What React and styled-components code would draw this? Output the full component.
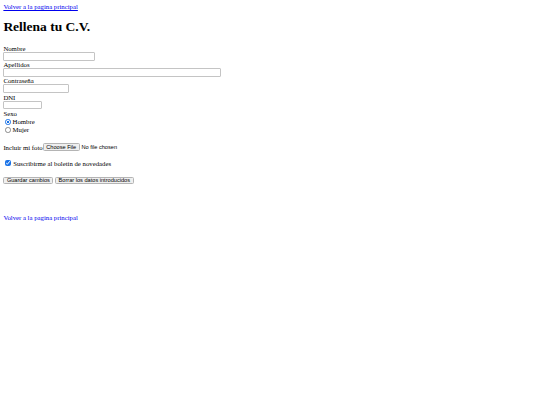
import React from "react";
import styled, { createGlobalStyle } from "styled-components";

const Global = createGlobalStyle`
  html, body { background: #fff; }
  body {
    margin: 3.375px;
    font-family: "Liberation Serif", "Times New Roman", serif;
    font-size: 6.75px;
    color: #000;
  }
`;

const HomeLink = styled.a`
  color: #0000ee;
  text-decoration: underline;
  text-decoration-thickness: 0.5px;
  text-underline-offset: 0.6px;
`;

const Title = styled.h1`
  font-size: 13.5px;
  font-weight: bold;
  margin: 9.05px 0 9.8px;
`;

const Form = styled.form`
  margin: 0;
`;

const Label = styled.label`
  display: block;
  line-height: normal;
`;

const TextInput = styled.input`
  box-sizing: border-box;
  display: block;
  width: ${(p) => p.$w}px;
  height: 8.6px;
  margin: 0 0 0.5px;
  padding: 0.4px 0.8px;
  font-family: "Liberation Sans", Arial, sans-serif;
  font-size: 5.625px;
  border: 1px solid #c4c4c4;
  border-radius: 1px;
  background: #fff;
  outline: none;
`;

const RadioGroup = styled.div`
  padding-top: 1px;
`;

const Row = styled.div`
  display: flex;
  align-items: center;
  height: 8px;
  line-height: normal;
`;

const Radio = styled.input`
  appearance: none;
  box-sizing: border-box;
  width: 5.5px;
  height: 5.5px;
  margin: 0.8px 1.6px 0 2.1px;
  border: 0.6px solid #8a8a8a;
  border-radius: 50%;
  background: #fff;
  &:checked {
    border-color: #1a73e8;
    background: radial-gradient(circle, #1a73e8 0 1.4px, #fff 1.5px 100%);
  }
`;

const Para = styled.div`
  margin: ${(p) => p.$mt}px 0 ${(p) => p.$mb}px;
  display: flex;
  align-items: center;
  line-height: normal;
`;

const FileInput = styled.input`
  font-family: "Liberation Sans", Arial, sans-serif;
  font-size: 5.625px;
  color: #000;
  margin-left: 0;
  &::file-selector-button {
    font-family: "Liberation Sans", Arial, sans-serif;
    font-size: 5.625px;
    height: 8px;
    padding: 0 2.5px;
    margin: 0 1.8px 0 0;
    border: 1px solid #b4b4b4;
    border-radius: 1.5px;
    background: #efefef;
    color: #000;
  }
`;

const Check = styled.input`
  width: 5.5px;
  height: 5.5px;
  margin: 1.3px 2.6px 1.3px 1.7px;
  accent-color: #1a73e8;
`;

const Buttons = styled.div`
  display: flex;
  gap: 1.7px;
  margin: 9.75px 0 6.75px;
`;

const Btn = styled.button`
  height: 7.4px;
  font-family: "Liberation Sans", Arial, sans-serif;
  font-size: 5.625px;
  line-height: 1;
  padding: 0 2.5px;
  border: 1px solid #b4b4b4;
  border-radius: 1.5px;
  background: #efefef;
  color: #000;
  margin: 0;
`;

const Spacer = styled.div`
  height: 23px;
`;

export default function App() {
  return (
    <>
      <Global />
      <HomeLink href="#">Volver a la pagina principal</HomeLink>
      <Title>Rellena tu C.V.</Title>
      <Form onSubmit={(e) => e.preventDefault()}>
        <Label>Nombre</Label>
        <TextInput type="text" $w={92} />
        <Label>Apellidos</Label>
        <TextInput type="text" $w={218} />
        <Label>Contraseña</Label>
        <TextInput type="password" $w={66} />
        <Label>DNI</Label>
        <TextInput type="text" $w={39} />
        <Label>Sexo</Label>
        <RadioGroup>
          <Row>
            <Radio type="radio" name="sexo" defaultChecked />
            <span>Hombre</span>
          </Row>
          <Row>
            <Radio type="radio" name="sexo" />
            <span>Mujer</span>
          </Row>
        </RadioGroup>
        <Para $mt={9.75} $mb={7.75}>
          <span>Incluir mi foto</span>
          <FileInput type="file" />
        </Para>
        <Para $mt={7.75} $mb={9.75}>
          <Check type="checkbox" defaultChecked />
          <span>Suscribirme al boletín de novedades</span>
        </Para>
        <Buttons>
          <Btn type="button">Guardar cambios</Btn>
          <Btn type="reset">Borrar los datos introducidos</Btn>
        </Buttons>
      </Form>
      <Spacer />
      <HomeLink href="#">Volver a la pagina principal</HomeLink>
    </>
  );
}
